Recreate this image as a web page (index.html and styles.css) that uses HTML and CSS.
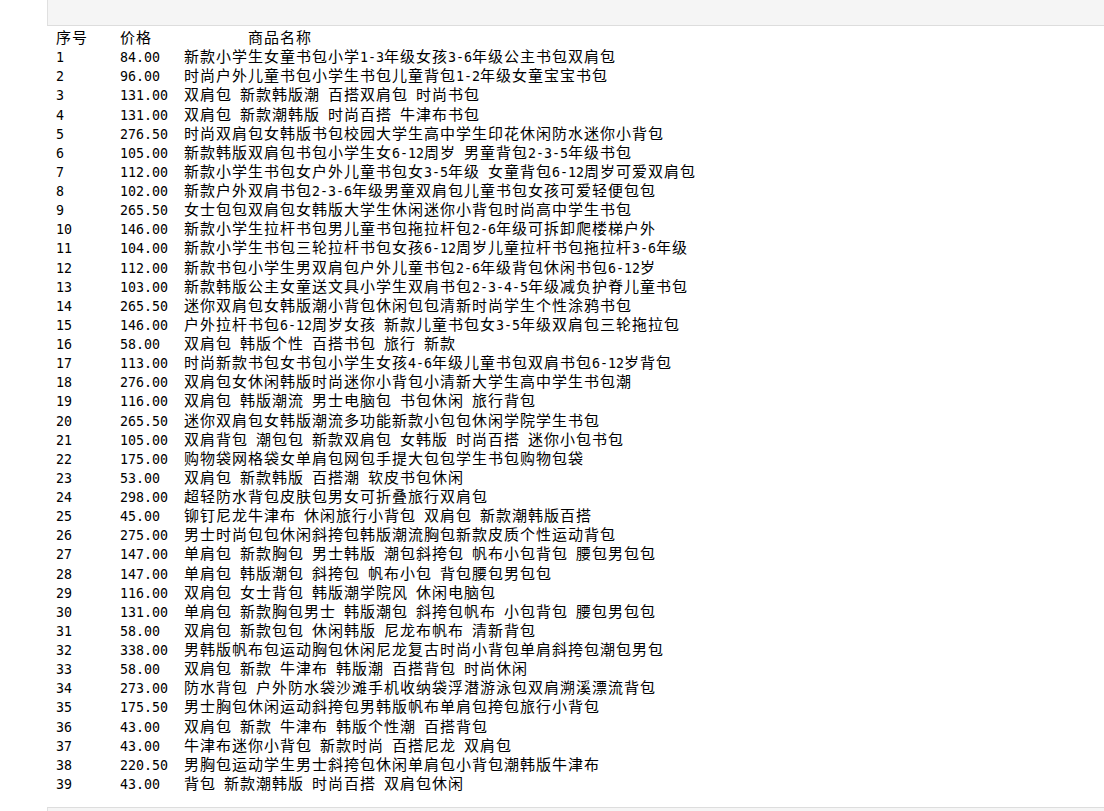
FILE: index.html
```html
<!DOCTYPE html>
<html lang="zh-CN">
  <head>
    <meta charset="UTF-8" />
    <title>商品列表</title>
    <link rel="stylesheet" href="styles.css">
  </head>
  <body>
    <div class="cell">
      <div class="input-area"></div>
      <pre class="output" id="out">序号&#9;价格&#9;&#9;商品名称
1&#9;84.00&#9;新款小学生女童书包小学1-3年级女孩3-6年级公主书包双肩包
2&#9;96.00&#9;时尚户外儿童书包小学生书包儿童背包1-2年级女童宝宝书包
3&#9;131.00&#9;双肩包 新款韩版潮 百搭双肩包 时尚书包
4&#9;131.00&#9;双肩包 新款潮韩版 时尚百搭 牛津布书包
5&#9;276.50&#9;时尚双肩包女韩版书包校园大学生高中学生印花休闲防水迷你小背包
6&#9;105.00&#9;新款韩版双肩包书包小学生女6-12周岁 男童背包2-3-5年级书包
7&#9;112.00&#9;新款小学生书包女户外儿童书包女3-5年级 女童背包6-12周岁可爱双肩包
8&#9;102.00&#9;新款户外双肩书包2-3-6年级男童双肩包儿童书包女孩可爱轻便包包
9&#9;265.50&#9;女士包包双肩包女韩版大学生休闲迷你小背包时尚高中学生书包
10&#9;146.00&#9;新款小学生拉杆书包男儿童书包拖拉杆包2-6年级可拆卸爬楼梯户外
11&#9;104.00&#9;新款小学生书包三轮拉杆书包女孩6-12周岁儿童拉杆书包拖拉杆3-6年级
12&#9;112.00&#9;新款书包小学生男双肩包户外儿童书包2-6年级背包休闲书包6-12岁
13&#9;103.00&#9;新款韩版公主女童送文具小学生双肩书包2-3-4-5年级减负护脊儿童书包
14&#9;265.50&#9;迷你双肩包女韩版潮小背包休闲包包清新时尚学生个性涂鸦书包
15&#9;146.00&#9;户外拉杆书包6-12周岁女孩 新款儿童书包女3-5年级双肩包三轮拖拉包
16&#9;58.00&#9;双肩包 韩版个性 百搭书包 旅行 新款
17&#9;113.00&#9;时尚新款书包女书包小学生女孩4-6年级儿童书包双肩书包6-12岁背包
18&#9;276.00&#9;双肩包女休闲韩版时尚迷你小背包小清新大学生高中学生书包潮
19&#9;116.00&#9;双肩包 韩版潮流 男士电脑包 书包休闲 旅行背包
20&#9;265.50&#9;迷你双肩包女韩版潮流多功能新款小包包休闲学院学生书包
21&#9;105.00&#9;双肩背包 潮包包 新款双肩包 女韩版 时尚百搭 迷你小包书包
22&#9;175.00&#9;购物袋网格袋女单肩包网包手提大包包学生书包购物包袋
23&#9;53.00&#9;双肩包 新款韩版 百搭潮 软皮书包休闲
24&#9;298.00&#9;超轻防水背包皮肤包男女可折叠旅行双肩包
25&#9;45.00&#9;铆钉尼龙牛津布 休闲旅行小背包 双肩包 新款潮韩版百搭
26&#9;275.00&#9;男士时尚包包休闲斜挎包韩版潮流胸包新款皮质个性运动背包
27&#9;147.00&#9;单肩包 新款胸包 男士韩版 潮包斜挎包 帆布小包背包 腰包男包包
28&#9;147.00&#9;单肩包 韩版潮包 斜挎包 帆布小包 背包腰包男包包
29&#9;116.00&#9;双肩包 女士背包 韩版潮学院风 休闲电脑包
30&#9;131.00&#9;单肩包 新款胸包男士 韩版潮包 斜挎包帆布 小包背包 腰包男包包
31&#9;58.00&#9;双肩包 新款包包 休闲韩版 尼龙布帆布 清新背包
32&#9;338.00&#9;男韩版帆布包运动胸包休闲尼龙复古时尚小背包单肩斜挎包潮包男包
33&#9;58.00&#9;双肩包 新款 牛津布 韩版潮 百搭背包 时尚休闲
34&#9;273.00&#9;防水背包 户外防水袋沙滩手机收纳袋浮潜游泳包双肩溯溪漂流背包
35&#9;175.50&#9;男士胸包休闲运动斜挎包男韩版帆布单肩包挎包旅行小背包
36&#9;43.00&#9;双肩包 新款 牛津布 韩版个性潮 百搭背包
37&#9;43.00&#9;牛津布迷你小背包 新款时尚 百搭尼龙 双肩包
38&#9;220.50&#9;男胸包运动学生男士斜挎包休闲单肩包小背包潮韩版牛津布
39&#9;43.00&#9;背包 新款潮韩版 时尚百搭 双肩包休闲</pre>
    </div>
    <div class="cell">
      <div class="input-area next"></div>
    </div>

    <script>
      // os caracteres chineses ocupam duas colunas da fonte mono
      const out = document.getElementById("out");
      out.innerHTML = out.innerHTML.replace(
        /[\u3000-\u9fff\uff00-\uffef]+/g,
        (m) => `<span class="cjk">${m}</span>`
      );
    </script>
  </body>
</html>
```

FILE: styles.css
```css
body {
  margin: 0;
  background-color: #ffffff;
  color: #000000;
  overflow: hidden;
}

.cell {
  margin-left: 47px;
}

.input-area {
  height: 25px;
  background: #f5f5f5;
  border-left: 1px solid #e0e0e0;
  border-bottom: 1px solid #dddddd;
}

.input-area.next {
  border-bottom: none;
  border-top: 1px solid #dddddd;
  height: 40px;
}

.output {
  margin: 0;
  padding: 3px 9px 13px 9px;
  font-family: "DejaVu Sans Mono", "Liberation Mono", monospace;
  font-size: 13.29px;
  line-height: 19.12px;
  tab-size: 8;
  white-space: pre;
}

.cjk {
  font-family: "Noto Sans CJK SC", sans-serif;
  font-size: 15px;
  letter-spacing: 1px;
  line-height: 1;
}
```
